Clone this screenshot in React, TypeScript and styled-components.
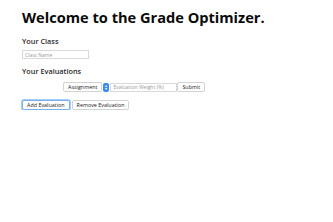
import React from 'react';
import styled, {createGlobalStyle} from "styled-components";

const GlobalStyle = createGlobalStyle`
    html, body {
        margin: 0;
        padding: 0;
        background: #ffffff;
    }
    body {
        font-family: "Open Sans", "Liberation Sans", sans-serif;
        color: #111111;
    }
`

export default function App() {
    return (
        <Page>
            <GlobalStyle/>
            <Title>Welcome to the Grade Optimizer.</Title>
            <SectionTitle gap={9}>Your Class</SectionTitle>
            <TextInput placeholder={'Class Name'} width={67}/>
            <SectionTitle gap={7}>Your Evaluations</SectionTitle>
            <EvaluationRow>
                <SmallButton>Assignment</SmallButton>
                <Stepper>
                    <span>▴</span>
                    <span>▾</span>
                </Stepper>
                <TextInput placeholder={'Evaluation Weight (%)'} width={67}/>
                <SmallButton>Submit</SmallButton>
            </EvaluationRow>
            <ButtonRow>
                <SmallButton focused>Add Evaluation</SmallButton>
                <SmallButton>Remove Evaluation</SmallButton>
            </ButtonRow>
        </Page>
    );
}

const Page = styled.div`
    padding: 8px 22px 0 22px;
`

const Title = styled.h1`
    margin: 0;
    font-size: 14.6px;
    font-weight: 700;
    line-height: 19px;
    color: #0a0a0a;
`

const SectionTitle = styled.h3<{ gap: number }>`
    margin: ${p => p.gap}px 0 3px 0;
    font-size: 7.3px;
    font-weight: 600;
    line-height: 11px;
    color: #2a2a2a;
`

const TextInput = styled.input<{ width: number }>`
    display: block;
    box-sizing: border-box;
    width: ${p => p.width}px;
    height: 9px;
    padding: 0 2px;
    margin: 0;
    border: 1px solid #d9d9d9;
    font-family: "Open Sans", "Liberation Sans", sans-serif;
    font-size: 5px;
    outline: none;
    &::placeholder {
        color: #9a9a9a;
    }
`

const EvaluationRow = styled.div`
    display: flex;
    align-items: center;
    margin: 5px 0 0 41px;
`

const SmallButton = styled.button<{ focused?: boolean }>`
    box-sizing: border-box;
    height: 10px;
    padding: 0 4px;
    margin: 0;
    background: #ffffff;
    border: 1px solid ${p => p.focused ? '#7ab0f0' : '#d2d2d2'};
    box-shadow: ${p => p.focused ? '0 0 0 1px #a9cdf7' : 'none'};
    border-radius: 2px;
    font-family: "Open Sans", "Liberation Sans", sans-serif;
    font-size: 5.4px;
    line-height: 8px;
    color: #222222;
`

const Stepper = styled.div`
    box-sizing: border-box;
    width: 6px;
    height: 9px;
    margin: 0 1px;
    background: #3b88f0;
    border-radius: 2px;
    display: flex;
    flex-direction: column;
    align-items: center;
    justify-content: center;
    color: #ffffff;
    font-size: 4px;
    line-height: 3.5px;
`

const ButtonRow = styled.div`
    display: flex;
    gap: 2px;
    margin-top: 8px;
`
